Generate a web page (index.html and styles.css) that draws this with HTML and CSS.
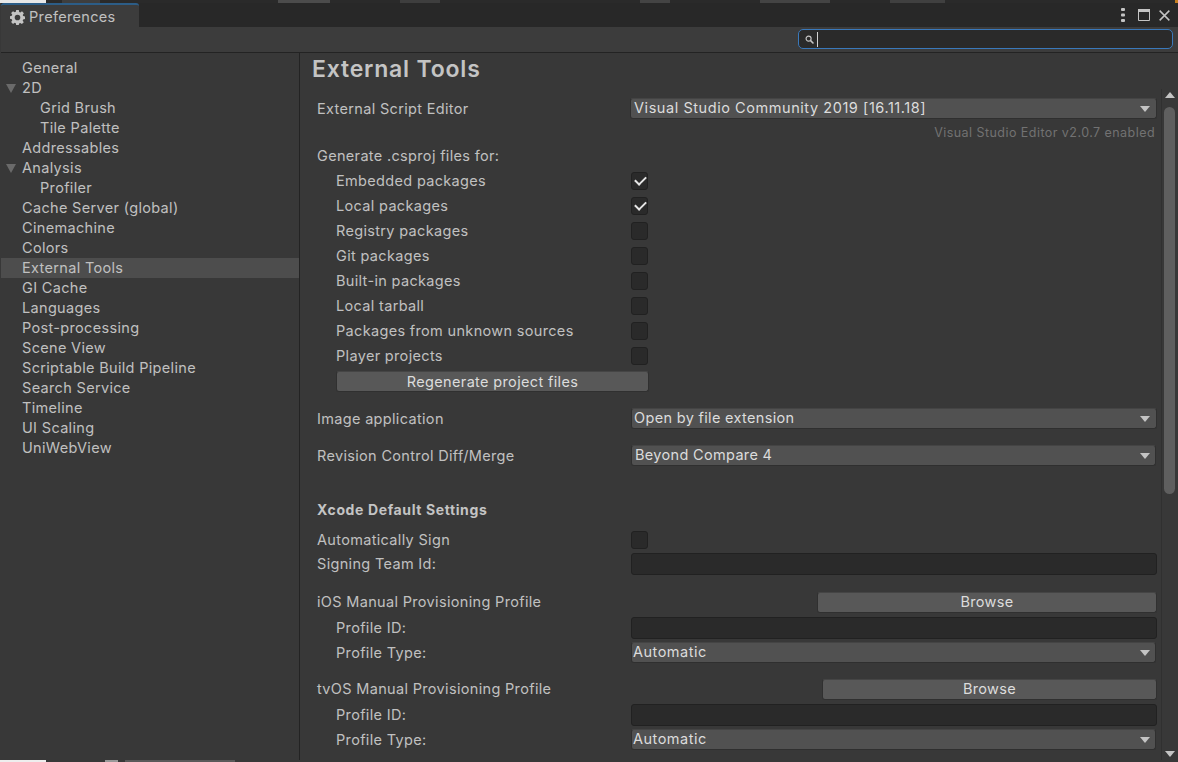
FILE: index.html
```html
<!DOCTYPE html>
<html lang="en">
<head>
<meta charset="utf-8">
<title>Preferences</title>
<link rel="stylesheet" href="styles.css">
</head>
<body>
<div class="strip strip-top"></div>
<div class="window">
  <header class="tabbar">
    <div class="tab">
      <svg class="gear" viewBox="0 0 16 16" width="15" height="15"><path fill="#c4c4c4" fill-rule="evenodd" d="M6.6 0h2.8l.4 2.1 1.2.5L12.8 1.4l2 2-1.2 1.8.5 1.2 1.9.4v2.8l-2 .4-.5 1.2 1.2 1.8-2 2-1.8-1.2-1.2.5-.4 1.9H6.6l-.4-2-1.2-.5-1.8 1.2-2-2 1.2-1.8-.5-1.2L0 9.4V6.6l1.9-.4.5-1.2-1.2-1.8 2-2L5 2.4l1.2-.5zM8 5a3 3 0 1 0 0 6 3 3 0 0 0 0-6z"/></svg>
      <span>Preferences</span>
    </div>
    <div class="win-actions">
      <svg class="act-dots" viewBox="0 0 4 14" width="4" height="14"><g fill="#c4c4c4"><rect y="0" width="4" height="3" rx="1"/><rect y="5.5" width="4" height="3" rx="1"/><rect y="11" width="4" height="3" rx="1"/></g></svg>
      <svg class="act-max" viewBox="0 0 12 12" width="12" height="12"><path fill="none" stroke="#c4c4c4" d="M.5.5h11v11H.5z"/><path fill="#c4c4c4" d="M0 0h12v3H0z"/></svg>
      <svg viewBox="0 0 12 12" width="11" height="11"><path stroke="#c4c4c4" stroke-width="1.6" d="M.7.7l10.6 10.6M11.3.7L.7 11.3"/></svg>
    </div>
  </header>
  <div class="toolbar">
    <div class="search">
      <svg viewBox="0 0 10 10" width="9" height="9"><circle cx="4" cy="4" r="2.8" fill="none" stroke="#c4c4c4" stroke-width="1.3"/><path stroke="#c4c4c4" stroke-width="1.7" d="M6 6l3.4 3.4"/></svg>
      <i class="caret"></i>
    </div>
  </div>
  <div class="body">
    <nav class="side">
      <div class="item">General</div>
      <div class="item"><i class="fold"></i>2D</div>
      <div class="item sub">Grid Brush</div>
      <div class="item sub">Tile Palette</div>
      <div class="item">Addressables</div>
      <div class="item"><i class="fold"></i>Analysis</div>
      <div class="item sub">Profiler</div>
      <div class="item">Cache Server (global)</div>
      <div class="item">Cinemachine</div>
      <div class="item">Colors</div>
      <div class="item active">External Tools</div>
      <div class="item">GI Cache</div>
      <div class="item">Languages</div>
      <div class="item">Post-processing</div>
      <div class="item">Scene View</div>
      <div class="item">Scriptable Build Pipeline</div>
      <div class="item">Search Service</div>
      <div class="item">Timeline</div>
      <div class="item">UI Scaling</div>
      <div class="item">UniWebView</div>
    </nav>
    <main class="main">
      <div class="content">
        <h1 class="title">External Tools</h1>
        <div class="form">
          <div class="row r-editor"><label>External Script Editor</label><div class="drop first"><span>Visual Studio Community 2019 [16.11.18]</span></div></div>
          <div class="note">Visual Studio Editor v2.0.7 enabled</div>
          <div class="row r-gen"><label>Generate .csproj files for:</label></div>
          <div class="row check ind"><label>Embedded packages</label><i class="box on"></i></div>
          <div class="row check ind"><label>Local packages</label><i class="box on"></i></div>
          <div class="row check ind"><label>Registry packages</label><i class="box"></i></div>
          <div class="row check ind"><label>Git packages</label><i class="box"></i></div>
          <div class="row check ind"><label>Built-in packages</label><i class="box"></i></div>
          <div class="row check ind"><label>Local tarball</label><i class="box"></i></div>
          <div class="row check ind"><label>Packages from unknown sources</label><i class="box"></i></div>
          <div class="row check ind"><label>Player projects</label><i class="box"></i></div>
          <button class="btn regen">Regenerate project files</button>
          <div class="row r-image"><label>Image application</label><div class="drop"><span>Open by file extension</span></div></div>
          <div class="row r-rev"><label>Revision Control Diff/Merge</label><div class="drop nudge"><span>Beyond Compare 4</span></div></div>
          <div class="section">Xcode Default Settings</div>
          <div class="row r-auto"><label>Automatically Sign</label><i class="box"></i></div>
          <div class="row r-team"><label>Signing Team Id:</label><div class="input"></div></div>
          <div class="row r-ios"><label>iOS Manual Provisioning Profile</label><button class="btn browse">Browse</button></div>
          <div class="row r-id ind"><label>Profile ID:</label><div class="input"></div></div>
          <div class="row r-type ind"><label>Profile Type:</label><div class="drop nudge auto"><span>Automatic</span></div></div>
          <div class="row r-tvos"><label>tvOS Manual Provisioning Profile</label><button class="btn browse tv">Browse</button></div>
          <div class="row r-id ind"><label>Profile ID:</label><div class="input"></div></div>
          <div class="row r-type ind"><label>Profile Type:</label><div class="drop nudge auto"><span>Automatic</span></div></div>
        </div>
      </div>
      <aside class="scrollbar">
        <i class="arrow up"></i>
        <div class="track"><div class="thumb"></div></div>
        <i class="arrow down"></i>
      </aside>
    </main>
  </div>
</div>
<div class="strip strip-bottom"></div>
</body>
</html>
```
FILE: styles.css
```css
* { box-sizing: border-box; }
html, body { margin: 0; padding: 0; height: 100%; overflow: hidden; }
body {
  width: 1178px; height: 762px; display: flex; flex-direction: column;
  background: #383838; color: #c0c0c0;
  font: 14.5px/20px Inter, "Liberation Sans", sans-serif;
  letter-spacing: .33px;
}
.strip { flex: none; }
.strip-top {
  height: 3px;
  background: linear-gradient(90deg, #e8e8e8 0 46px, #2a2a2a 46px 62px, #3e3e3e 62px 100px, #2a2a2a 100px 278px, #4c4c4c 278px 330px, #2a2a2a 330px 400px, #3e3e3e 400px 440px, #2a2a2a 440px 640px, #444 640px 670px, #2a2a2a 670px 760px, #444 760px 830px, #2a2a2a 830px 890px, #404040 890px 945px, #2a2a2a 945px 1175px, #c67f20 1175px);
}
.strip-bottom {
  height: 2px;
  background: linear-gradient(90deg, #eee 0 46px, #383838 46px 105px, #999 105px 118px, #383838 118px 125px, #5a5a5a 125px 235px, #383838 235px);
}
.window { flex: 1; min-height: 0; display: flex; flex-direction: column; padding-left: 1px; background: #383838; }

.tabbar { flex: none; height: 24px; display: flex; justify-content: space-between; background: #282828; }
.tab {
  width: 138px; height: 24px; display: flex; align-items: center; gap: 4px; padding: 2px 0 0 9px;
  background: #3c3c3c; border-top: 2px solid #2c5d87; border-radius: 3px 3px 0 0;
  color: #c0c0c0;
}
.win-actions { display: flex; align-items: center; padding: 0 8px 0 0; height: 22px; margin-top: 1px; }
.act-dots { margin-right: 13px; }
.act-max { margin-right: 9px; }

.toolbar { flex: none; height: 26px; display: flex; justify-content: flex-end; align-items: center; padding: 0 5px 1px 0; background: #3c3c3c; border-bottom: 1px solid #232323; }
.search {
  width: 375px; height: 20px; display: flex; align-items: center; gap: 3px; padding-left: 6px;
  background: #2a2a2a; border: 1px solid #3a79bb; border-radius: 5px;
}
.caret { width: 1px; height: 15px; background: #d2d2d2; }

.body { flex: 1; min-height: 0; display: flex; }
.side { flex: none; width: 299px; padding-top: 5px; border-right: 1px solid #232323; background: #383838; }
.item { position: relative; height: 20px; padding-left: 21px; line-height: 20px; white-space: nowrap; }
.item.sub { padding-left: 39px; }
.item.active { background: #4d4d4d; }
.fold { position: absolute; left: 5px; top: 6px; border: 5px solid transparent; border-top: 9px solid #6a6a6a; border-bottom: 0; }

.main { flex: 1; min-width: 0; display: flex; overflow: hidden; }
.content { flex: 1; min-width: 0; padding: 0 4px 0 12px; }
.title { margin: 0; height: 33px; font-size: 23px; line-height: 33px; font-weight: 600; letter-spacing: .8px; color: #c4c4c4; }
.form { padding-left: 5px; }

.row { display: flex; align-items: center; justify-content: space-between; height: 22px; }
.row label { flex: none; }
.ind { padding-left: 19px; }
.check { height: 25px; }
.r-editor { margin-top: 12px; }
.r-gen { height: 20px; margin-top: 3px; }
.r-gen + .check { margin-top: 2px; }
.r-image { margin-top: 16px; }
.r-rev { margin-top: 15px; }
.r-auto { margin-top: 7px; height: 22px; }
.r-team { margin-top: 2px; }
.r-ios { margin-top: 16px; }
.r-id { margin-top: 4px; }
.r-type { margin-top: 3px; }
.r-tvos { margin-top: 14px; }

.note { height: 20px; margin-top: 3px; text-align: right; padding-right: 2px; font-size: 12.5px; letter-spacing: .45px; color: #727272; }
.section { height: 22px; margin-top: 33px; line-height: 20px; font-size: 14px; font-weight: 700; letter-spacing: .62px; color: #c4c4c4; }

.drop, .input, .btn { flex: none; border-radius: 3px; }
.drop {
  position: relative; align-self: flex-start; width: 526px; height: 21px; padding-left: 2px;
  background: #515151; border: 1px solid #2f2f2f; border-top-color: #444; color: #dcdcdc; line-height: 17px;
}
.drop span { display: block; white-space: nowrap; }
.drop::after { content: ""; position: absolute; right: 6px; top: 7px; border: 5px solid transparent; border-top: 6px solid #c4c4c4; border-bottom: 0; }
.drop.first { width: 527px; padding-left: 3px; letter-spacing: .56px; }
.drop.nudge { width: 525px; margin-right: 1px; padding-left: 3px; }
.drop.nudge::after { right: 5px; }
.drop.auto { padding-left: 1px; letter-spacing: .5px; }
.input { width: 526px; height: 22px; background: #2a2a2a; border: 1px solid #212121; }
.box { flex: none; display: block; position: relative; width: 17px; height: 18px; margin-right: 509px; background: #2a2a2a; border: 1px solid #212121; border-radius: 3px; }
.box.on::after { content: ""; position: absolute; left: 3px; top: 3px; width: 9px; height: 5px; border: solid #e6e6e6; border-width: 0 0 2px 2px; transform: rotate(-45deg); }

.btn { display: block; height: 21px; padding: 0; background: #585858; border: 1px solid #303030; border-top-color: #454545; color: #dcdcdc; font: inherit; letter-spacing: inherit; line-height: 18px; text-align: center; }
.regen { width: 313px; margin: 3px 0 0 19px; letter-spacing: .35px; }
.browse { width: 340px; }
.browse.tv { width: 335px; }

.scrollbar { flex: none; width: 17px; display: flex; flex-direction: column; align-items: center; border-left: 1px solid #303030; margin-top: 36px; padding-bottom: 3px; }
.track { flex: 1; width: 100%; padding: 9px 1px 0 2px; }
.thumb { width: 11px; height: 387px; border-radius: 6px; background: #5f5f5f; }
.arrow { flex: none; border: 5px solid transparent; }
.arrow.up { margin-top: 3px; border-bottom: 6px solid #c4c4c4; border-top: 0; }
.arrow.down { border-top: 6px solid #c4c4c4; border-bottom: 0; }
```
